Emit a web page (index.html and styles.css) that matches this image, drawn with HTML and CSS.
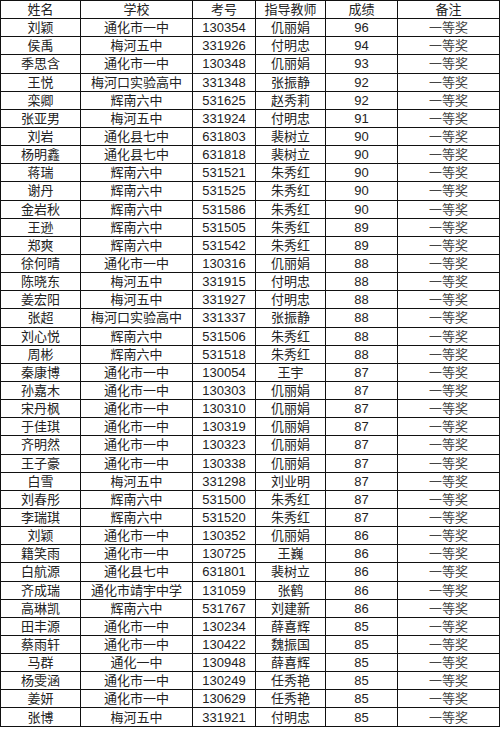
FILE: index.html
```html
<!DOCTYPE html>
<html lang="zh-CN">
<head>
<meta charset="utf-8">
<title>成绩表</title>
<link rel="stylesheet" href="styles.css">
</head>
<body>
<table class="sheet">
<colgroup>
<col class="c-name"><col class="c-school"><col class="c-id"><col class="c-teacher"><col class="c-score"><col class="c-note">
</colgroup>
<thead>
<tr><th>姓名</th><th>学校</th><th>考号</th><th>指导教师</th><th>成绩</th><th>备注</th></tr>
</thead>
<tbody>
<tr><td>刘颖</td><td>通化市一中</td><td>130354</td><td>仉丽娟</td><td>96</td><td class="note">一等奖</td></tr>
<tr><td>侯禹</td><td>梅河五中</td><td>331926</td><td>付明忠</td><td>94</td><td class="note">一等奖</td></tr>
<tr><td>季思含</td><td>通化市一中</td><td>130348</td><td>仉丽娟</td><td>93</td><td class="note">一等奖</td></tr>
<tr><td>王悦</td><td>梅河口实验高中</td><td>331348</td><td>张振静</td><td>92</td><td class="note">一等奖</td></tr>
<tr><td>栾卿</td><td>辉南六中</td><td>531625</td><td>赵秀莉</td><td>92</td><td class="note">一等奖</td></tr>
<tr><td>张亚男</td><td>梅河五中</td><td>331924</td><td>付明忠</td><td>91</td><td class="note">一等奖</td></tr>
<tr><td>刘岩</td><td>通化县七中</td><td>631803</td><td>裴树立</td><td>90</td><td class="note">一等奖</td></tr>
<tr><td>杨明鑫</td><td>通化县七中</td><td>631818</td><td>裴树立</td><td>90</td><td class="note">一等奖</td></tr>
<tr><td>蒋瑞</td><td>辉南六中</td><td>531521</td><td>朱秀红</td><td>90</td><td class="note">一等奖</td></tr>
<tr><td>谢丹</td><td>辉南六中</td><td>531525</td><td>朱秀红</td><td>90</td><td class="note">一等奖</td></tr>
<tr><td>金岩秋</td><td>辉南六中</td><td>531586</td><td>朱秀红</td><td>90</td><td class="note">一等奖</td></tr>
<tr><td>王逊</td><td>辉南六中</td><td>531505</td><td>朱秀红</td><td>89</td><td class="note">一等奖</td></tr>
<tr><td>郑爽</td><td>辉南六中</td><td>531542</td><td>朱秀红</td><td>89</td><td class="note">一等奖</td></tr>
<tr><td>徐何晴</td><td>通化市一中</td><td>130316</td><td>仉丽娟</td><td>88</td><td class="note">一等奖</td></tr>
<tr><td>陈晓东</td><td>梅河五中</td><td>331915</td><td>付明忠</td><td>88</td><td class="note">一等奖</td></tr>
<tr><td>姜宏阳</td><td>梅河五中</td><td>331927</td><td>付明忠</td><td>88</td><td class="note">一等奖</td></tr>
<tr><td>张超</td><td>梅河口实验高中</td><td>331337</td><td>张振静</td><td>88</td><td class="note">一等奖</td></tr>
<tr><td>刘心悦</td><td>辉南六中</td><td>531506</td><td>朱秀红</td><td>88</td><td class="note">一等奖</td></tr>
<tr><td>周彬</td><td>辉南六中</td><td>531518</td><td>朱秀红</td><td>88</td><td class="note">一等奖</td></tr>
<tr><td>秦康博</td><td>通化市一中</td><td>130054</td><td>王宇</td><td>87</td><td class="note">一等奖</td></tr>
<tr><td>孙嘉木</td><td>通化市一中</td><td>130303</td><td>仉丽娟</td><td>87</td><td class="note">一等奖</td></tr>
<tr><td>宋丹枫</td><td>通化市一中</td><td>130310</td><td>仉丽娟</td><td>87</td><td class="note">一等奖</td></tr>
<tr><td>于佳琪</td><td>通化市一中</td><td>130319</td><td>仉丽娟</td><td>87</td><td class="note">一等奖</td></tr>
<tr><td>齐明然</td><td>通化市一中</td><td>130323</td><td>仉丽娟</td><td>87</td><td class="note">一等奖</td></tr>
<tr><td>王子豪</td><td>通化市一中</td><td>130338</td><td>仉丽娟</td><td>87</td><td class="note">一等奖</td></tr>
<tr><td>白雪</td><td>梅河五中</td><td>331298</td><td>刘业明</td><td>87</td><td class="note">一等奖</td></tr>
<tr><td>刘春彤</td><td>辉南六中</td><td>531500</td><td>朱秀红</td><td>87</td><td class="note">一等奖</td></tr>
<tr><td>李瑞琪</td><td>辉南六中</td><td>531520</td><td>朱秀红</td><td>87</td><td class="note">一等奖</td></tr>
<tr><td>刘颖</td><td>通化市一中</td><td>130352</td><td>仉丽娟</td><td>86</td><td class="note">一等奖</td></tr>
<tr><td>籍笑雨</td><td>通化市一中</td><td>130725</td><td>王巍</td><td>86</td><td class="note">一等奖</td></tr>
<tr><td>白航源</td><td>通化县七中</td><td>631801</td><td>裴树立</td><td>86</td><td class="note">一等奖</td></tr>
<tr><td>齐成瑞</td><td>通化市靖宇中学</td><td>131059</td><td>张鹤</td><td>86</td><td class="note">一等奖</td></tr>
<tr><td>高琳凯</td><td>辉南六中</td><td>531767</td><td>刘建新</td><td>86</td><td class="note">一等奖</td></tr>
<tr><td>田丰源</td><td>通化市一中</td><td>130234</td><td>薛喜辉</td><td>85</td><td class="note">一等奖</td></tr>
<tr><td>蔡雨轩</td><td>通化市一中</td><td>130422</td><td>魏振国</td><td>85</td><td class="note">一等奖</td></tr>
<tr><td>马群</td><td>通化一中</td><td>130948</td><td>薛喜辉</td><td>85</td><td class="note">一等奖</td></tr>
<tr><td>杨雯涵</td><td>通化市一中</td><td>130249</td><td>任秀艳</td><td>85</td><td class="note">一等奖</td></tr>
<tr><td>姜妍</td><td>通化市一中</td><td>130629</td><td>任秀艳</td><td>85</td><td class="note">一等奖</td></tr>
<tr><td>张博</td><td>梅河五中</td><td>331921</td><td>付明忠</td><td>85</td><td class="note">一等奖</td></tr>
</tbody>
</table>
</body>
</html>
```

FILE: styles.css
```css
html, body {
  margin: 0;
  padding: 0;
  background: #ffffff;
}

.sheet {
  border-collapse: collapse;
  table-layout: fixed;
  width: 499px;
  margin: 0;
  font-family: "Liberation Sans", "Noto Sans CJK SC", sans-serif;
  font-size: 13px;
  color: #222222;
}

.c-name { width: 80px; }
.c-school { width: 112px; }
.c-id { width: 63px; }
.c-teacher { width: 70px; }
.c-score { width: 72px; }
.c-note { width: 102px; }

.sheet tr {
  height: 18.15px;
}

.sheet th,
.sheet td {
  border: 1px solid #111111;
  padding: 0;
  text-align: center;
  vertical-align: middle;
  line-height: 15px;
  font-weight: normal;
  white-space: nowrap;
  overflow: hidden;
}

.sheet td.note {
  color: #444444;
}
```
